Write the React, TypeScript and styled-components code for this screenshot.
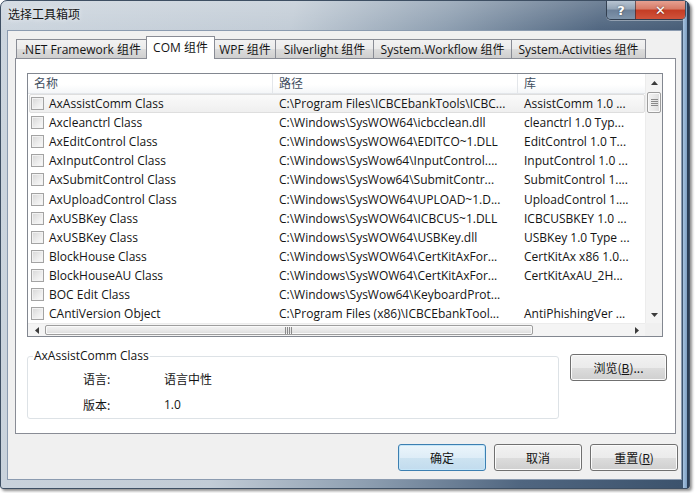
import styled, { createGlobalStyle, css } from 'styled-components';

const GlobalStyle = createGlobalStyle`
  html, body {
    margin: 0;
    padding: 0;
    background: #ffffff;
  }
  body {
    font-family: 'Open Sans', 'Noto Sans CJK SC', sans-serif;
    font-size: 12px;
    color: #141414;
  }
`;

const rows: [string, string, string][] = [
  ['AxAssistComm Class', 'C:\\Program Files\\ICBCEbankTools\\ICBC...', 'AssistComm 1.0 ...'],
  ['Axcleanctrl Class', 'C:\\Windows\\SysWOW64\\icbcclean.dll', 'cleanctrl 1.0 Typ...'],
  ['AxEditControl Class', 'C:\\Windows\\SysWOW64\\EDITCO~1.DLL', 'EditControl 1.0 T...'],
  ['AxInputControl Class', 'C:\\Windows\\SysWow64\\InputControl....', 'InputControl 1.0 ...'],
  ['AxSubmitControl Class', 'C:\\Windows\\SysWow64\\SubmitContr...', 'SubmitControl 1....'],
  ['AxUploadControl Class', 'C:\\Windows\\SysWOW64\\UPLOAD~1.D...', 'UploadControl 1....'],
  ['AxUSBKey Class', 'C:\\Windows\\SysWOW64\\ICBCUS~1.DLL', 'ICBCUSBKEY 1.0 ...'],
  ['AxUSBKey Class', 'C:\\Windows\\SysWOW64\\USBKey.dll', 'USBKey 1.0 Type ...'],
  ['BlockHouse Class', 'C:\\Windows\\SysWOW64\\CertKitAxFor...', 'CertKitAx x86 1.0...'],
  ['BlockHouseAU Class', 'C:\\Windows\\SysWOW64\\CertKitAxFor...', 'CertKitAxAU_2H...'],
  ['BOC Edit Class', 'C:\\Windows\\SysWow64\\KeyboardProt...', ''],
  ['CAntiVersion Object', 'C:\\Program Files (x86)\\ICBCEbankTool...', 'AntiPhishingVer ...'],
];

const tabs = [
  { label: '.NET Framework 组件', w: 131 },
  { label: 'COM 组件', w: 69, active: true },
  { label: 'WPF 组件', w: 62 },
  { label: 'Silverlight 组件', w: 99 },
  { label: 'System.Workflow 组件', w: 139 },
  { label: 'System.Activities 组件', w: 135 },
];

const Page = styled.div`
  width: 696px;
  height: 493px;
  overflow: hidden;
`;

const Window = styled.div`
  box-sizing: border-box;
  width: 690px;
  height: 489px;
  display: flex;
  flex-direction: column;
  padding: 0 7px 8px 6px;
  border: 1px solid #3e4f63;
  border-radius: 7px 7px 3px 3px;
  background:
    linear-gradient(
      to right,
      transparent calc(100% - 6px),
      #a6c3e0 calc(100% - 6px),
      #7e9fc2 calc(100% - 2px),
      #2c3f57 calc(100% - 2px)
    ),
    linear-gradient(180deg, rgba(255, 255, 255, 0.18), rgba(255, 255, 255, 0) 30px),
    linear-gradient(100deg, #ccd5de 0%, #c2ccd6 38%, #8e9fb1 58%, #506680 78%, #3b526c 100%);
  box-shadow: 2px 2px 3px rgba(0, 0, 0, 0.45);
`;

const TitleBar = styled.div`
  height: 29px;
  display: flex;
  justify-content: space-between;
  align-items: flex-start;
`;

const Title = styled.div`
  padding: 5px 0 0 1px;
  font-family: 'Noto Sans CJK SC', sans-serif;
  font-size: 12px;
  line-height: 16px;
  color: #151515;
  text-shadow: 0 0 5px rgba(255, 255, 255, 0.9);
`;

const CaptionGroup = styled.div`
  display: flex;
  margin-right: -4px;
  border: 1px solid rgba(30, 40, 55, 0.7);
  border-top: none;
  border-radius: 0 0 5px 5px;
  overflow: hidden;
  box-shadow: 0 1px 0 rgba(255, 255, 255, 0.35);
`;

const CaptionButton = styled.div<{ $close?: boolean }>`
  box-sizing: border-box;
  height: 18px;
  width: ${(p) => (p.$close ? '50px' : '28px')};
  display: flex;
  align-items: center;
  justify-content: center;
  font-family: 'DejaVu Sans', sans-serif;
  font-weight: bold;
  font-size: 13px;
  color: #ffffff;
  text-shadow: 0 0 2px rgba(0, 0, 0, 0.6);
  ${(p) =>
    p.$close
      ? css`
          background: linear-gradient(180deg, #e6a091 0%, #d77a66 45%, #c43c24 50%, #d0533b 100%);
          border-left: 1px solid rgba(30, 40, 55, 0.6);
        `
      : css`
          background: linear-gradient(180deg, #b7c4d2 0%, #93a4b6 45%, #6c8098 50%, #7f94aa 100%);
        `}
`;

const Client = styled.div`
  flex: 1;
  display: flex;
  flex-direction: column;
  background: #f0f0f0;
  border: 1px solid #8b9bb0;
`;

const TabWrap = styled.div`
  padding: 5px 5px 0 7px;
`;

const TabStrip = styled.div`
  display: flex;
  align-items: flex-end;
  height: 23px;
  margin-bottom: -1px;
  padding-left: 1px;
  position: relative;
  z-index: 1;
`;

const Tab = styled.div<{ $w: number; $active?: boolean }>`
  box-sizing: border-box;
  width: ${(p) => p.$w}px;
  height: ${(p) => (p.$active ? '23px' : '20px')};
  margin-left: -1px;
  border: 1px solid #898c95;
  border-bottom: ${(p) => (p.$active ? 'none' : '1px solid #898c95')};
  background: ${(p) =>
    p.$active ? '#ffffff' : 'linear-gradient(180deg, #f2f2f2 0%, #ebebeb 50%, #dddddd 50%, #cfcfcf 100%)'};
  text-align: center;
  white-space: nowrap;
  line-height: ${(p) => (p.$active ? '22px' : '19px')};
  font-size: 12px;
  color: #141414;
  &:first-child {
    margin-left: 0;
  }
`;

const Panel = styled.div`
  display: flex;
  flex-direction: column;
  background: #ffffff;
  border: 1px solid #898c95;
  padding: 14px 12px 14px 11px;
`;

const ListView = styled.div`
  box-sizing: border-box;
  height: 264px;
  border: 1px solid #828790;
  display: grid;
  grid-template-columns: 1fr 17px;
  grid-template-rows: 1fr 13px;
`;

const ListBody = styled.div`
  overflow: hidden;
`;

const Header = styled.div`
  box-sizing: border-box;
  height: 20px;
  display: grid;
  grid-template-columns: 245px 245px 1fr;
  border-bottom: 1px solid #e3e6ea;
  background: linear-gradient(180deg, #ffffff 0%, #ffffff 55%, #f4f6f8 100%);
`;

const HeaderCell = styled.div`
  padding-left: 6px;
  line-height: 19px;
  color: #3f4e60;
  border-right: 1px solid #e3e6ea;
  white-space: nowrap;
  &:last-child {
    border-right: none;
  }
`;

const Row = styled.div<{ $hot?: boolean }>`
  box-sizing: border-box;
  height: 19.1px;
  margin-left: 1px;
  display: grid;
  grid-template-columns: 243px 245px 1fr;
  align-items: stretch;
  border: 1px solid transparent;
  border-radius: 2px;
  ${(p) =>
    p.$hot &&
    css`
      border-color: #dedede;
      background: linear-gradient(180deg, #fafafa 0%, #efefef 100%);
    `}
`;

const NameCell = styled.div`
  display: flex;
  align-items: center;
  gap: 5px;
  padding-left: 1px;
  white-space: nowrap;
  overflow: hidden;
`;

const Cell = styled.div`
  display: flex;
  align-items: center;
  padding-left: 6px;
  white-space: nowrap;
  overflow: hidden;
`;

const CheckBox = styled.span`
  box-sizing: border-box;
  flex: none;
  width: 13px;
  height: 13px;
  border: 1px solid #a3a3a3;
  background: linear-gradient(135deg, #d6d6d6 0%, #ececec 55%, #fbfbfb 100%);
  box-shadow: inset 0 0 0 1px #f2f2f2;
`;

const VScroll = styled.div`
  display: flex;
  flex-direction: column;
  background: #f4f4f4;
  border-left: 1px solid #ececec;
`;

const HScroll = styled.div`
  display: flex;
  background: #f4f4f4;
  border-top: 1px solid #ececec;
`;

const ArrowBox = styled.div<{ $horizontal?: boolean }>`
  flex: none;
  width: ${(p) => (p.$horizontal ? '17px' : 'auto')};
  height: ${(p) => (p.$horizontal ? 'auto' : '17px')};
  display: flex;
  align-items: center;
  justify-content: center;
`;

const VThumb = styled.div`
  box-sizing: border-box;
  height: 21px;
  margin: 1px 1px 0 1px;
  border: 1px solid #9d9d9d;
  border-radius: 2px;
  background: linear-gradient(90deg, #f3f3f3 0%, #e9e9e9 50%, #dcdcdc 100%);
  box-shadow: inset 0 0 0 1px #fafafa;
  display: flex;
  align-items: center;
  justify-content: center;
`;

const HThumb = styled.div`
  box-sizing: border-box;
  width: 488px;
  margin: 1px 0;
  border: 1px solid #9d9d9d;
  border-radius: 2px;
  background: linear-gradient(180deg, #f3f3f3 0%, #e9e9e9 50%, #dcdcdc 100%);
  box-shadow: inset 0 0 0 1px #fafafa;
  display: flex;
  align-items: center;
  justify-content: center;
`;

const Spacer = styled.div`
  flex: 1;
`;

const Corner = styled.div`
  background: #f0f0f0;
`;

const BottomRow = styled.div`
  display: flex;
  align-items: flex-start;
  margin-top: 11px;
`;

const GroupBox = styled.fieldset`
  box-sizing: border-box;
  flex: none;
  width: 532px;
  height: 71px;
  margin: 0;
  padding: 0;
  border: 1px solid #dde2e6;
  border-radius: 3px;
`;

const Legend = styled.legend`
  margin-left: 5px;
  padding: 0 1px;
  font-size: 12px;
  line-height: 16px;
  color: #141414;
`;

const InfoGrid = styled.div`
  display: grid;
  grid-template-columns: 81px 1fr;
  grid-auto-rows: 26px;
  align-items: center;
  padding: 1px 0 0 55px;
  font-family: 'Noto Sans CJK SC', sans-serif;
`;

const InfoValue = styled.span`
  font-family: 'Open Sans', 'Noto Sans CJK SC', sans-serif;
`;

const PushButton = styled.div<{ $w: number; $default?: boolean }>`
  box-sizing: border-box;
  width: ${(p) => p.$w}px;
  height: 27px;
  flex: none;
  display: flex;
  align-items: center;
  justify-content: center;
  border: 1px solid #707070;
  border-radius: 3px;
  background: linear-gradient(180deg, #f2f2f2 0%, #ebebeb 50%, #dddddd 50%, #cfcfcf 100%);
  box-shadow: inset 0 0 0 1px #fbfbfb;
  font-family: 'Noto Sans CJK SC', sans-serif;
  font-size: 12px;
  color: #141414;
  ${(p) =>
    p.$default &&
    css`
      border-color: #3c7fb1;
      background: linear-gradient(180deg, #ebf5fb 0%, #deedf7 50%, #cde3f1 50%, #c2dcee 100%);
      box-shadow: inset 0 0 0 1px #c6e6f8;
    `}
`;

const BrowseButton = styled(PushButton)`
  margin: 6px 0 0 11px;
`;

const ButtonBar = styled.div`
  flex: 1;
  display: flex;
  justify-content: flex-end;
  align-items: flex-start;
  gap: 8px;
  padding: 10px 3px 0 0;
`;

const Accel = styled.u`
  text-underline-offset: 1px;
`;

function Arrow({ dir }: { dir: 'up' | 'down' | 'left' | 'right' }) {
  const points = {
    up: '0,4 3.5,0 7,4',
    down: '0,0 3.5,4 7,0',
    left: '4,0 0,3.5 4,7',
    right: '0,0 4,3.5 0,7',
  }[dir];
  const vertical = dir === 'up' || dir === 'down';
  return (
    <svg width={vertical ? 7 : 4} height={vertical ? 4 : 7} viewBox={vertical ? '0 0 7 4' : '0 0 4 7'}>
      <polygon points={points} fill="#3b3b3b" />
    </svg>
  );
}

function Grip({ horizontal }: { horizontal?: boolean }) {
  const lines = [0, 2, 4, 6];
  return horizontal ? (
    <svg width="8" height="7" viewBox="0 0 8 7">
      {lines.map((x) => (
        <line key={x} x1={x + 0.5} y1="0" x2={x + 0.5} y2="7" stroke="#8a8a8a" strokeWidth="1" />
      ))}
    </svg>
  ) : (
    <svg width="7" height="8" viewBox="0 0 7 8">
      {lines.map((y) => (
        <line key={y} x1="0" y1={y + 0.5} x2="7" y2={y + 0.5} stroke="#8a8a8a" strokeWidth="1" />
      ))}
    </svg>
  );
}

export default function App() {
  return (
    <Page>
      <GlobalStyle />
      <Window>
        <TitleBar>
          <Title>选择工具箱项</Title>
          <CaptionGroup>
            <CaptionButton>?</CaptionButton>
            <CaptionButton $close>✕</CaptionButton>
          </CaptionGroup>
        </TitleBar>
        <Client>
          <TabWrap>
            <TabStrip>
              {tabs.map((t) => (
                <Tab key={t.label} $w={t.w} $active={t.active}>
                  {t.label}
                </Tab>
              ))}
            </TabStrip>
            <Panel>
              <ListView>
                <ListBody>
                  <Header>
                    <HeaderCell>名称</HeaderCell>
                    <HeaderCell>路径</HeaderCell>
                    <HeaderCell>库</HeaderCell>
                  </Header>
                  {rows.map(([name, path, lib], i) => (
                    <Row key={i} $hot={i === 0}>
                      <NameCell>
                        <CheckBox />
                        {name}
                      </NameCell>
                      <Cell>{path}</Cell>
                      <Cell>{lib}</Cell>
                    </Row>
                  ))}
                </ListBody>
                <VScroll>
                  <ArrowBox>
                    <Arrow dir="up" />
                  </ArrowBox>
                  <VThumb>
                    <Grip />
                  </VThumb>
                  <Spacer />
                  <ArrowBox>
                    <Arrow dir="down" />
                  </ArrowBox>
                </VScroll>
                <HScroll>
                  <ArrowBox $horizontal>
                    <Arrow dir="left" />
                  </ArrowBox>
                  <HThumb>
                    <Grip horizontal />
                  </HThumb>
                  <Spacer />
                  <ArrowBox $horizontal>
                    <Arrow dir="right" />
                  </ArrowBox>
                </HScroll>
                <Corner />
              </ListView>
              <BottomRow>
                <GroupBox>
                  <Legend>AxAssistComm Class</Legend>
                  <InfoGrid>
                    <span>语言:</span>
                    <span>语言中性</span>
                    <span>版本:</span>
                    <InfoValue>1.0</InfoValue>
                  </InfoGrid>
                </GroupBox>
                <BrowseButton $w={97}>
                  浏览(<Accel>B</Accel>)...
                </BrowseButton>
              </BottomRow>
            </Panel>
          </TabWrap>
          <ButtonBar>
            <PushButton $w={88} $default>
              确定
            </PushButton>
            <PushButton $w={88}>取消</PushButton>
            <PushButton $w={88}>
              重置(<Accel>R</Accel>)
            </PushButton>
          </ButtonBar>
        </Client>
      </Window>
    </Page>
  );
}
